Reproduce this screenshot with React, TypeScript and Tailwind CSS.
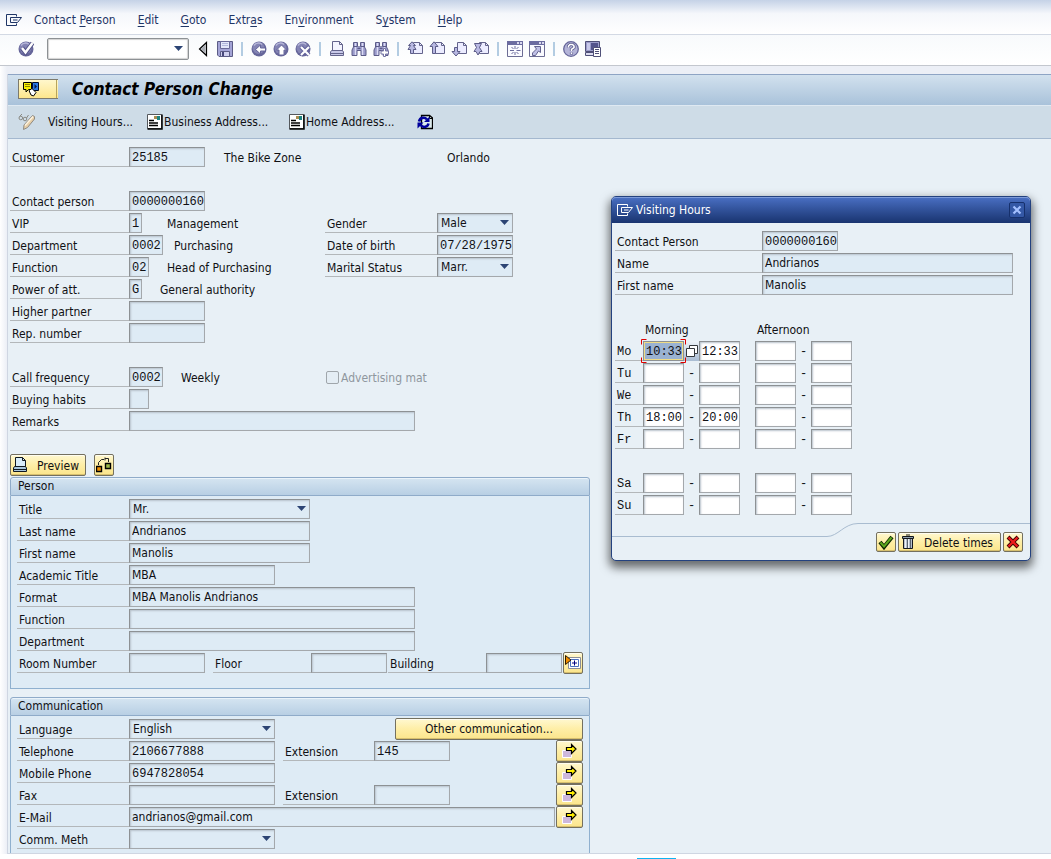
import React, { useState } from 'react';

const sans = "font-['DejaVu_Sans_Condensed','DejaVu_Sans',sans-serif]";
const mono = "font-['Liberation_Mono',monospace]";

const box = 'h-5 shrink-0 border border-[#a4a8ac] border-t-[#8d9194] border-l-[#8d9194] shadow-[inset_1px_1px_2px_#b9c3cc] outline-none';

interface FieldProps {
    id?: string;
    label?: string;
    value?: string;
    width: string;
    text?: boolean;
    white?: boolean;
}

const Field: React.FC<FieldProps> = ({ id, label, value = '', width, text, white }) => {
    const [current, setCurrent] = useState(value);
    return (
        <input
            id={id}
            aria-label={label}
            type="text"
            value={current}
            onChange={(e) => setCurrent(e.target.value)}
            className={`${box} pl-[2px] text-[12px] leading-4 ${width} ${text ? sans : `pt-[2px] ${mono}`} ${white ? 'bg-white' : 'bg-[#deebf5]'}`}
        />
    );
};

const Dropdown: React.FC<{ id: string; options: string[]; width: string }> = ({ id, options, width }) => (
    <div className={`relative h-5 shrink-0 ${width}`}>
        <select id={id} className={`${box} block w-full appearance-none bg-[#deebf5] pl-[3px] text-[12px] leading-4`}>
            {options.map((o) => (
                <option key={o}>{o}</option>
            ))}
        </select>
        <svg className="pointer-events-none absolute top-[7px] right-1 h-[5px] w-[9px]" viewBox="0 0 9 5">
            <path d="M0 0h9L4.500 5z" fill="#2c4474" />
        </svg>
    </div>
);

const Row: React.FC<{ children?: React.ReactNode }> = ({ children }) => <div className="flex h-[22px] items-center">{children}</div>;

interface LabelProps {
    htmlFor?: string;
    width: string;
    children: React.ReactNode;
    typewriter?: boolean;
}

const Label: React.FC<LabelProps> = ({ htmlFor, width, children, typewriter }) => (
    <label
        htmlFor={htmlFor}
        className={`block h-5 shrink-0 border-b border-[#b3b7ba] pl-[2px] leading-[22px] whitespace-nowrap ${width} ${typewriter ? mono : ''}`}
    >
        {children}
    </label>
);

const Text: React.FC<{ children: React.ReactNode; className?: string }> = ({ children, className = '' }) => (
    <span className={`pt-[2px] whitespace-nowrap ${className}`}>{children}</span>
);

const yellow = 'rounded-[2px] border border-[#74705f] bg-linear-to-b from-[#fff8d0] via-[#feeea6] to-[#fbe58c] shadow-[inset_0_1px_0_#fffdf0,inset_0_-1px_0_#d6bf6e]';

/* ---------- icons ---------- */

const Icon: React.FC<{ children: React.ReactNode }> = ({ children }) => (
    <svg width="16" height="16" viewBox="0 0 16 16" fill="none" className="block shrink-0">
        {children}
    </svg>
);

const MenuIcon = () => (
    <Icon>
        <path d="M10.500 4.500v-2h-10v11h10v-2M4.500 10.500v-5H15.500l-4 5H4.500M7 8h4.500" stroke="currentColor" />
    </Icon>
);

const Disc = () => (
    <>
        <circle cx="8" cy="8" r="7.500" fill="#66669a" />
        <circle cx="7.500" cy="7" r="6" fill="#8484b4" />
        <path d="M3 4.500c2-3 6-3 8-1" stroke="#b6b6d8" strokeWidth="1.500" />
    </>
);

const EnterIcon = () => (
    <Icon>
        <Disc />
        <path d="M4 7l3.500 4.500L14.500 2" stroke="#54548a" strokeWidth="4.500" />
        <path d="M4 7l3.500 4.500L14.500 2" stroke="#fff" strokeWidth="2.500" />
    </Icon>
);
const LeftIcon = () => (
    <Icon>
        <path d="M11.500 1.500v13l-7-6.500z" fill="#d4d6da" stroke="#000" strokeWidth="1.200" />
        <path d="M10 4.500v7L6 8z" fill="#a8acb4" />
    </Icon>
);
const SaveIcon = () => (
    <Icon>
        <path d="M.5.5h15v15H2l-1.500-1.500z" fill="#a4a4d6" stroke="#5c5c86" />
        <path d="M3.500.5h9v7h-9z" fill="#e4e8fa" stroke="#6a6a98" />
        <path d="M5 2.500h6M5 4.500h6" stroke="#b2b8dc" />
        <path d="M3.500 10.500h9v5h-9z" fill="#d0d0ee" stroke="#5c5c86" />
        <path d="M5 11h2v4H5z" fill="#48487a" />
    </Icon>
);
const BackIcon = () => (
    <Icon>
        <Disc />
        <path d="M4.500 8.500L9.500 4v3h5v3h-5v3z" fill="#fff" stroke="#66669a" />
    </Icon>
);
const ExitIcon = () => (
    <Icon>
        <Disc />
        <path d="M8.500 4l5 5h-2.500v5H6V9H3.500z" fill="#fff" stroke="#66669a" />
    </Icon>
);
const CancelIcon = () => (
    <Icon>
        <Disc />
        <path d="M6 6l8 8M14 6l-8 8" stroke="#60609a" strokeWidth="4" />
        <path d="M6 6l8 8M14 6l-8 8" stroke="#fff" strokeWidth="2.200" />
    </Icon>
);
const PrintIcon = ({ dark }: { dark?: boolean }) => (
    <Icon>
        <path d="M3.500 10.500v-10h7l3 3v7" fill={dark ? '#d8ecfa' : '#f4f4ff'} stroke={dark ? '#101820' : '#64648c'} />
        <path d="M10.500.5v3h3" stroke={dark ? '#101820' : '#64648c'} />
        <path d="M2.500 9.500h11l1 1.500v3.500H1.500V11z" fill={dark ? '#a8c6dc' : '#c8c8e8'} stroke={dark ? '#101820' : '#64648c'} />
        <path d="M1.500 12.500h13" stroke={dark ? '#101820' : '#64648c'} />
    </Icon>
);
const FindIcon = ({ next }: { next?: boolean }) => (
    <Icon>
        <path d="M2.500 1.500h4v3.500l1 1h1l1-1V1.500h4V6l1.500 3v5.500h-5v-5h-4v5h-5V9l1.500-3z" fill="#9c9ccc" stroke="#5c5c88" />
        <path d="M4.500 2v12M11.500 2v12" stroke="#dcdcf4" strokeWidth="1.400" />
        <path d="M2.500 5.500h4M9.500 5.500h4M6.500 7.500h3" stroke="#5c5c88" />
        {next && <path d="M10.500 7.500h2v2.500h3v3h-3v2.500h-2V13h-2.500v-3h2.500z" fill="#fff" stroke="#7474a4" />}
    </Icon>
);

const PageNavIcon = ({ kind }: { kind: 'first' | 'prev' | 'next' | 'last' }) => (
    <Icon>
        <path d="M6.500 1.500h6l3 3v8h-9z" fill="#ececff" stroke="#64648c" />
        <path d="M12.500 1.500v3h3" stroke="#64648c" />
        {kind === 'first' && <path d="M5 .8L8.500 4.500H6.500L9 8.500H6.500v4h-3v-4H1l2.500-4h-2z" fill="#b8b8e2" stroke="#5c5c88" />}
        {kind === 'prev' && <path d="M5 .8L9 5.500H6.500v7h-3v-7H1z" fill="#b8b8e2" stroke="#5c5c88" />}
        {kind === 'next' && <path d="M5 15L1 10.500h2.500v-4h3v4H9z" fill="#b8b8e2" stroke="#5c5c88" />}
        {kind === 'last' && <path d="M1.500 2.500h7l-2 4 2.500 4h-2L5 14l-2-3.500H1l2.500-4z" fill="#b8b8e2" stroke="#5c5c88" />}
    </Icon>
);
const SessionIcon = () => (
    <Icon>
        <path d="M.5.5h15v15H.5z" fill="#fafaff" stroke="#6c6c94" />
        <path d="M0 0h16v4H0z" fill="#6c6ca0" />
        <path d="M10 1h2v2h-2zM13 1h2v2h-2z" fill="#d8d8ee" />
        <path d="M8 5v3M8 11v3M3 9.500h4M9.500 9.500h4M4.500 6l2 2M9.500 11l2 2M11.500 6l-2 2M6.500 11l-2 2" stroke="#6c6c9c" />
    </Icon>
);
const ShortcutIcon = () => (
    <Icon>
        <path d="M.5.5h15v15H.5z" fill="#fafaff" stroke="#6c6c94" />
        <path d="M0 0h16v4H0z" fill="#6c6ca0" />
        <path d="M10 1h2v2h-2zM13 1h2v2h-2z" fill="#d8d8ee" />
        <path d="M5.500 5.500h6v6L9.500 10 6.500 14.500h-3V12L7.500 8z" fill="#c0c0e6" stroke="#62628e" />
    </Icon>
);
const HelpIcon = () => (
    <Icon>
        <circle cx="8" cy="8" r="7.300" fill="#b4b4d8" stroke="#66669a" strokeWidth="1.300" />
        <path d="M5.500 6.500V5L7 3.500h2.500L11 5v1.500L8.500 8.500V10M8.500 11.500v2" stroke="#5c5c90" strokeWidth="3.200" />
        <path d="M5.500 6.500V5L7 3.500h2.500L11 5v1.500L8.500 8.500V10M8.500 11.500v1.500" stroke="#fff" strokeWidth="1.600" />
    </Icon>
);
const LayoutIcon = () => (
    <Icon>
        <path d="M.5.500h14v10H.5z" fill="#9c9cca" stroke="#505078" />
        <path d="M2 2h3v7H2z" fill="#c8c8ea" />
        <path d="M6 2h7v7H6z" fill="#54548c" />
        <path d="M.5 11.500h10v3H.5z" fill="#dcdcf0" stroke="#505078" />
        <path d="M8.500 6.500h7v9h-7z" fill="#fff" stroke="#505078" />
        <path d="M10 8.500h4M10 10.500h4M10 12.500h4" stroke="#505078" />
    </Icon>
);
const PencilIcon = () => (
    <svg width="18" height="18" viewBox="0 0 18 18" fill="none" className="block">
        <circle cx="2.800" cy="5" r="1.800" stroke="#8a8a84" />
        <circle cx="7" cy="6" r="1.800" stroke="#8a8a84" />
        <path d="M1.500 3.500L4 1M8.500 5l2-3" stroke="#8a8a84" />
        <path d="M14.500 2.500l2 1v2.500L9.500 14.500l-4 2 .5-4.500z" fill="#e8cfa8" stroke="#8e8a82" />
        <path d="M7 12.500l8-9" stroke="#fdf4e2" strokeWidth="1.300" />
    </svg>
);
const AddressIcon = () => (
    <Icon>
        <path d="M.5.5h14v14H.5z" fill="#fff" stroke="#54585c" />
        <path d="M15 .5V15H.5" stroke="#000" strokeWidth="1.500" />
        <path d="M7 2h3v3H7z" fill="#a88c50" />
        <path d="M10 2h3v4h-3z" fill="#1c8482" />
        <path d="M2 6.500h5M2 9h9M2 11.500h9" stroke="#000" strokeWidth="1.500" />
    </Icon>
);
const RefreshIcon = () => (
    <Icon>
        <path d="M4.500 1.500h8l3 2.500v10.500h-11z" fill="#dceaec" stroke="#000" strokeWidth="1.300" />
        <path d="M12.500 1.500v3h3" stroke="#000" />
        <path d="M2 7.500C3 3.500 7.500 2.500 10 5.500M11.500 9.500c-1 4-5.500 4.500-8 1.500" stroke="#00009c" strokeWidth="2.600" />
        <path d="M12.500 2.500V8H7zM.5 14.500V8.500H6.500z" fill="#00009c" />
    </Icon>
);
const ServicesIcon = () => (
    <svg width="18" height="16" viewBox="0 0 18 16" fill="none" className="block">
        <path d="M1.500 1.500h8v7H6.500L4 11V8.500H1.500z" fill="#f8f000" stroke="#000" />
        <path d="M3 3.500h5M3 5.500h5" stroke="#8c8400" />
        <path d="M10.500 1.500h6v8h-6z" fill="#2a78e4" stroke="#000c28" />
        <path d="M12.500 3l2.500 2.500-2.500 2.500z" fill="#061848" />
        <path d="M7 9.500l3-2 4 4-2.500 3.500-2.500-1z" fill="#fff" stroke="#000" />
    </svg>
);
const RelationIcon = () => (
    <Icon>
        <path d="M2.500 8V5.500L5.500 2.500H8M9 .5v3M9 1.500h3.500V5" stroke="#222" />
        <path d="M.5 9.500h5v5h-5z" fill="#f09000" stroke="#000" strokeWidth="1.400" />
        <path d="M9.500 6.500h5v5h-5z" fill="#9cb848" stroke="#000" strokeWidth="1.400" />
    </Icon>
);
const ExpandIcon = () => (
    <Icon>
        <path d="M3.500 2.500h12v11h-12z" fill="#fff" stroke="#8a8e98" />
        <path d="M5.500 4.500h8v7h-8z" fill="#fff" stroke="#4a6fbe" />
        <path d="M9.500 5.500v5M7 8h5" stroke="#000080" />
        <path d="M.5.500L6 5 .5 9.500z" fill="#f08c00" stroke="#2c1c00" />
    </Icon>
);
const ArrowIcon = () => (
    <Icon>
        <path d="M.5 7.500h9v7h-9z" fill="#cdb8dc" stroke="#fff" />
        <path d="M4.500 4.500h5V1.500L14 6l-4.500 4.500v-3h-5z" fill="#ffee00" stroke="#000" strokeWidth="1.200" />
    </Icon>
);
const TrashIcon = () => (
    <Icon>
        <path d="M3.500 4.500h9v10h-9z" fill="#b6c0cc" stroke="#14181c" />
        <path d="M5.500 5v9M8.500 5v9" stroke="#eef2f6" />
        <path d="M7.500 5v9M10.500 5v9" stroke="#5a6470" />
        <path d="M2.500 2.500h11v2h-11z" fill="#90a0b0" stroke="#14181c" />
        <path d="M6 1h4" stroke="#14181c" />
    </Icon>
);
const CheckIcon = () => (
    <Icon>
        <path d="M2 8l4 5 8-10" stroke="#0c2400" strokeWidth="4" />
        <path d="M2.500 8.500L6 12.500 13.500 3.500" stroke="#5ca81c" strokeWidth="2" />
    </Icon>
);
const CrossIcon = () => (
    <Icon>
        <path d="M3 3l10 10M13 3L3 13" stroke="#400000" strokeWidth="4" />
        <path d="M3.500 3.500l9 9M12.500 3.500l-9 9" stroke="#ee1c1c" strokeWidth="2.200" />
    </Icon>
);

/* ---------- top bars ---------- */

const menus = [
    ['Contact ', 'P', 'erson'],
    ['', 'E', 'dit'],
    ['', 'G', 'oto'],
    ['Extr', 'a', 's'],
    ['En', 'v', 'ironment'],
    ['S', 'y', 'stem'],
    ['', 'H', 'elp'],
];

const MenuBar = () => (
    <nav className="flex h-[35px] items-center border-b border-[#d3d9e4] bg-linear-to-b from-[#c5d2e7] via-[#f5f7fb] via-40% to-white pt-[6px] pl-[6px] text-[#1f3566]">
        <button aria-label="System menu">
            <MenuIcon />
        </button>
        <div className="flex gap-[22px] pl-3">
            {menus.map(([before, key, after]) => (
                <button key={before + key} className="leading-4 whitespace-pre">
                    {before}
                    <span className="underline underline-offset-2">{key}</span>
                    {after}
                </button>
            ))}
        </div>
    </nav>
);

type Tool = [string, React.ReactNode];

const toolGroups: Tool[][] = [
    [
        ['Back', <BackIcon />],
        ['Exit', <ExitIcon />],
        ['Cancel', <CancelIcon />],
    ],
    [
        ['Print', <PrintIcon />],
        ['Find', <FindIcon />],
        ['Find next', <FindIcon next />],
    ],
    [
        ['First page', <PageNavIcon kind="first" />],
        ['Previous page', <PageNavIcon kind="prev" />],
        ['Next page', <PageNavIcon kind="next" />],
        ['Last page', <PageNavIcon kind="last" />],
    ],
    [
        ['New session', <SessionIcon />],
        ['Create shortcut', <ShortcutIcon />],
    ],
    [
        ['Help', <HelpIcon />],
        ['Customize layout', <LayoutIcon />],
    ],
];

const ToolBar = () => (
    <div className="flex h-[31px] items-center gap-[6px] border-b border-[#c3c7ce] bg-linear-to-b from-[#f8fafc] to-white pb-[2px] pl-[18px]">
        <button aria-label="Enter">
            <EnterIcon />
        </button>
        <div className="relative ml-[7px] h-[22px] w-[142px]">
            <input
                aria-label="Command"
                type="text"
                className="h-full w-full rounded-[2px] border border-[#8d9194] bg-white px-1 shadow-[inset_0_0_1px_1px_#d2d2d2] outline-none"
            />
            <svg className="pointer-events-none absolute top-2 right-[6px] h-[5px] w-[9px]" viewBox="0 0 9 5">
                <path d="M0 0h9L4.500 5z" fill="#2c4474" />
            </svg>
        </div>
        <button aria-label="Hide command field">
            <LeftIcon />
        </button>
        <button aria-label="Save">
            <SaveIcon />
        </button>
        {toolGroups.map((group, i) => (
            <React.Fragment key={i}>
                <span className="mx-[2px] h-[14px] w-[2px] bg-[#b3cce2]" />
                {group.map(([name, icon]) => (
                    <button key={name} aria-label={name}>
                        {icon}
                    </button>
                ))}
            </React.Fragment>
        ))}
    </div>
);

const TitleBar = () => (
    <header className="border-t border-[#8ea4c4]">
        <div className="flex h-[31px] items-center gap-[14px] border-b border-[#dfe9f2] bg-linear-to-b from-[#d2e1ee] to-[#a9c2da] pb-[2px] pl-[10px]">
            <button
                aria-label="Services for object"
                className="flex h-5 w-10 items-center border border-r-0 border-[#7d7a6c] bg-linear-to-b from-[#fff7cc] to-[#fde68c] pl-[3px]"
            >
                <ServicesIcon />
                <span className="ml-4 h-[18px] w-px bg-[#b8a45c]" />
            </button>
            <h1 className="text-[17px] leading-5 font-bold text-black italic">Contact Person Change</h1>
        </div>
        <div className="flex h-[33px] items-center border-b border-[#a4b8cf] bg-[#cedce7] pl-[10px]">
            <button aria-label="Display or change">
                <PencilIcon />
            </button>
            <button className="ml-3 w-[99px] text-left leading-4">Visiting Hours...</button>
            <button className="flex w-[142px] items-center gap-px leading-4">
                <AddressIcon />
                Business Address...
            </button>
            <button className="flex w-[128px] items-center gap-px leading-4">
                <AddressIcon />
                Home Address...
            </button>
            <button aria-label="Refresh">
                <RefreshIcon />
            </button>
        </div>
    </header>
);

/* ---------- form ---------- */

const GeneralData = () => (
    <section className="pl-[2px]">
        <Row>
            <Label htmlFor="customer" width="w-[119px]">Customer</Label>
            <Field id="customer" value="25185" width="w-[76px]" />
            <Text className="ml-[19px] w-[223px]">The Bike Zone</Text>
            <Text>Orlando</Text>
        </Row>
        <Row />
        <Row>
            <Label htmlFor="contact" width="w-[119px]">Contact person</Label>
            <Field id="contact" value="0000000160" width="w-[76px]" />
        </Row>
        <div className="flex">
            <div className="w-[315px]">
                <Row>
                    <Label htmlFor="vip" width="w-[119px]">VIP</Label>
                    <Field id="vip" value="1" width="w-[13px]" />
                    <Text className="ml-[25px]">Management</Text>
                </Row>
                <Row>
                    <Label htmlFor="dept" width="w-[119px]">Department</Label>
                    <Field id="dept" value="0002" width="w-[34px]" />
                    <Text className="ml-[11px]">Purchasing</Text>
                </Row>
                <Row>
                    <Label htmlFor="func" width="w-[119px]">Function</Label>
                    <Field id="func" value="02" width="w-5" />
                    <Text className="ml-[18px]">Head of Purchasing</Text>
                </Row>
                <Row>
                    <Label htmlFor="power" width="w-[119px]">Power of att.</Label>
                    <Field id="power" value="G" width="w-[13px]" />
                    <Text className="ml-[18px]">General authority</Text>
                </Row>
                <Row>
                    <Label htmlFor="higher" width="w-[119px]">Higher partner</Label>
                    <Field id="higher" width="w-[76px]" />
                </Row>
                <Row>
                    <Label htmlFor="rep" width="w-[119px]">Rep. number</Label>
                    <Field id="rep" width="w-[76px]" />
                </Row>
            </div>
            <div>
                <Row>
                    <Label htmlFor="gender" width="w-[112px]">Gender</Label>
                    <Dropdown id="gender" options={['Male', 'Female']} width="w-[76px]" />
                </Row>
                <Row>
                    <Label htmlFor="birth" width="w-[112px]">Date of birth</Label>
                    <Field id="birth" value="07/28/1975" width="w-[76px]" />
                </Row>
                <Row>
                    <Label htmlFor="marital" width="w-[112px]">Marital Status</Label>
                    <Dropdown id="marital" options={['Marr.', 'Single']} width="w-[76px]" />
                </Row>
            </div>
        </div>
        <Row />
        <Row>
            <Label htmlFor="freq" width="w-[119px]">Call frequency</Label>
            <Field id="freq" value="0002" width="w-[34px]" />
            <Text className="ml-[18px] w-[145px]">Weekly</Text>
            <label className="flex items-center gap-[2px] text-[#8f979e]">
                <input type="checkbox" disabled className="h-[13px] w-[13px] appearance-none rounded-[2px] border border-[#a0a6ab] bg-[#e4edf4]" />
                <Text>Advertising mat</Text>
            </label>
        </Row>
        <Row>
            <Label htmlFor="habits" width="w-[119px]">Buying habits</Label>
            <Field id="habits" width="w-5" />
        </Row>
        <Row>
            <Label htmlFor="remarks" width="w-[119px]">Remarks</Label>
            <Field id="remarks" width="w-[286px]" />
        </Row>
        <Row />
        <div className="flex gap-2">
            <button className={`flex h-[22px] w-[76px] items-center gap-[9px] pl-[1px] leading-4 ${yellow}`}>
                <PrintIcon dark />
                <Text>Preview</Text>
            </button>
            <button aria-label="Relationships" className={`flex h-[22px] w-5 items-center justify-center ${yellow}`}>
                <RelationIcon />
            </button>
        </div>
    </section>
);

const panelHead = 'h-[19px] rounded-t-[3px] border border-[#8fabc9] bg-linear-to-b from-[#d5e5f1] to-[#b8cfe4] pl-[7px] leading-4 shadow-[inset_0_1px_0_#eaf3fa]';

const PersonPanel = () => (
    <section className="mt-px ml-[2px] w-[580px]">
        <h2 className={panelHead}>Person</h2>
        <div className="border border-t-0 border-[#8fb0cf] bg-[#deebf5] pt-[2px] pb-[14px] pl-[6px]">
            <Row>
                <Label htmlFor="title" width="w-28">Title</Label>
                <Dropdown id="title" options={['Mr.', 'Ms.']} width="w-[181px]" />
            </Row>
            <Row>
                <Label htmlFor="last" width="w-28">Last name</Label>
                <Field id="last" value="Andrianos" width="w-[181px]" text />
            </Row>
            <Row>
                <Label htmlFor="first" width="w-28">First name</Label>
                <Field id="first" value="Manolis" width="w-[181px]" text />
            </Row>
            <Row>
                <Label htmlFor="academic" width="w-28">Academic Title</Label>
                <Field id="academic" value="MBA" width="w-[146px]" text />
            </Row>
            <Row>
                <Label htmlFor="format" width="w-28">Format</Label>
                <Field id="format" value="MBA Manolis Andrianos" width="w-[286px]" text />
            </Row>
            <Row>
                <Label htmlFor="pfunc" width="w-28">Function</Label>
                <Field id="pfunc" width="w-[286px]" />
            </Row>
            <Row>
                <Label htmlFor="pdept" width="w-28">Department</Label>
                <Field id="pdept" width="w-[286px]" />
            </Row>
            <Row>
                <Label htmlFor="room" width="w-28">Room Number</Label>
                <Field id="room" width="w-[76px]" />
                <span className="w-2" />
                <Label htmlFor="floor" width="w-[98px]">Floor</Label>
                <Field id="floor" width="w-[76px]" />
                <span className="w-px" />
                <Label htmlFor="building" width="w-[98px]">Building</Label>
                <Field id="building" width="w-[76px]" />
                <button aria-label="More fields" className={`ml-px flex h-[22px] w-5 items-center justify-center ${yellow}`}>
                    <ExpandIcon />
                </button>
            </Row>
        </div>
    </section>
);

const ArrowButton: React.FC<{ label: string }> = ({ label }) => (
    <button aria-label={label} className={`mr-[6px] ml-auto flex h-[22px] w-[27px] items-center justify-center ${yellow}`}>
        <ArrowIcon />
    </button>
);

const CommunicationPanel = () => (
    <section className="mt-2 ml-[2px] w-[580px]">
        <h2 className={panelHead}>Communication</h2>
        <div className="border-x border-[#8fb0cf] bg-[#deebf5] pt-[2px] pb-[3px] pl-[6px]">
            <Row>
                <Label htmlFor="language" width="w-28">Language</Label>
                <Dropdown id="language" options={['English', 'German']} width="w-[146px]" />
                <button className={`mr-[6px] ml-auto h-[22px] w-[188px] leading-4 ${yellow}`}>Other communication...</button>
            </Row>
            <Row>
                <Label htmlFor="tel" width="w-28">Telephone</Label>
                <Field id="tel" value="2106677888" width="w-[146px]" />
                <span className="w-2" />
                <Label htmlFor="telext" width="w-[91px]">Extension</Label>
                <Field id="telext" value="145" width="w-[76px]" />
                <ArrowButton label="More telephone numbers" />
            </Row>
            <Row>
                <Label htmlFor="mobile" width="w-28">Mobile Phone</Label>
                <Field id="mobile" value="6947828054" width="w-[146px]" />
                <ArrowButton label="More mobile numbers" />
            </Row>
            <Row>
                <Label htmlFor="fax" width="w-28">Fax</Label>
                <Field id="fax" width="w-[146px]" />
                <span className="w-2" />
                <Label htmlFor="faxext" width="w-[91px]">Extension</Label>
                <Field id="faxext" width="w-[76px]" />
                <ArrowButton label="More fax numbers" />
            </Row>
            <Row>
                <Label htmlFor="email" width="w-28">E-Mail</Label>
                <Field id="email" value="andrianos@gmail.com" width="w-[426px]" text />
                <ArrowButton label="More e-mail addresses" />
            </Row>
            <Row>
                <Label htmlFor="comm" width="w-28">Comm. Meth</Label>
                <Dropdown id="comm" options={['', 'E-Mail', 'Telephone']} width="w-[146px]" />
            </Row>
        </div>
    </section>
);

/* ---------- popup ---------- */

const days = [
    { day: 'Mo', from: '10:33', to: '12:33' },
    { day: 'Tu' },
    { day: 'We' },
    { day: 'Th', from: '18:00', to: '20:00' },
    { day: 'Fr' },
    null,
    { day: 'Sa' },
    { day: 'Su' },
];

const Dash = () => <span className="w-[15px] pt-[2px] text-center font-['Liberation_Mono',monospace]">-</span>;

const FocusedTime: React.FC<{ id: string; value: string }> = ({ id, value }) => {
    const [time, setTime] = useState(value);
    return (
        <div className="relative h-5 w-[41px]">
            <input
                id={id}
                type="text"
                value={time}
                onChange={(e) => setTime(e.target.value)}
                className="h-5 w-[41px] border border-[#8d9194] bg-[#9ab2d2] pt-[2px] pl-[2px] font-['Liberation_Mono',monospace] text-[12px] leading-4 shadow-[inset_0_0_0_1px_#f0dc86] outline-none"
            />
            <svg className="pointer-events-none absolute -top-[2px] -left-[2px]" width="45" height="24" viewBox="0 0 45 24" fill="none" stroke="#e00000">
                <path d="M.5 5.500v-5h5M39.500.500h5v5M.5 18.500v5h5M39.500 23.500h5v-5" />
            </svg>
        </div>
    );
};

const VisitingHours = () => (
    <div
        role="dialog"
        aria-label="Visiting Hours"
        className="absolute top-[196px] left-[611px] w-[420px] rounded-[5px] border border-[#24427f] bg-[#e8f0f6] shadow-[0_5px_10px_2px_rgba(0,0,0,0.55)]"
    >
        <div className="flex h-[26px] items-center gap-[3px] rounded-t-[4px] bg-linear-to-b from-[#4a70c4] to-[#193470] pr-[5px] pl-[5px] text-white shadow-[inset_0_1px_0_#7d9ad8]">
            <MenuIcon />
            <span className="leading-4">Visiting Hours</span>
            <button aria-label="Close" className="ml-auto flex h-4 w-4 items-center justify-center rounded-[2px] border border-[#16306c] bg-[#3458a6]">
                <svg width="10" height="10" viewBox="0 0 10 10" stroke="#a4c0ff" strokeWidth="2.200">
                    <path d="M1.500 1.500l7 7M8.500 1.500l-7 7" />
                </svg>
            </button>
        </div>
        <div className="pt-[7px] pl-[3px]">
            <Row>
                <Label htmlFor="p-contact" width="w-[147px]">Contact Person</Label>
                <Field id="p-contact" value="0000000160" width="w-[76px]" />
            </Row>
            <Row>
                <Label htmlFor="p-name" width="w-[147px]">Name</Label>
                <Field id="p-name" value="Andrianos" width="w-[251px]" text />
            </Row>
            <Row>
                <Label htmlFor="p-first" width="w-[147px]">First name</Label>
                <Field id="p-first" value="Manolis" width="w-[251px]" text />
            </Row>
            <Row />
            <Row>
                <Text className="w-[142px] pl-[30px]">Morning</Text>
                <Text>Afternoon</Text>
            </Row>
            {days.map((d, i) =>
                d ? (
                    <Row key={d.day}>
                        <Label htmlFor={`${d.day}-1`} width="w-7" typewriter>{d.day}</Label>
                        {i === 0 ? (
                            <>
                                <FocusedTime id="Mo-1" value="10:33" />
                                <button aria-label="Choose time" className="flex h-5 w-[15px] items-center justify-center bg-linear-to-b from-[#eef3f8] to-[#a9bcd3]">
                                    <svg width="12" height="12" viewBox="0 0 12 12" fill="#fff" stroke="#35383c">
                                        <path d="M3.500.500h8v8h-8z" />
                                        <path d="M.5 3.500h8v8h-8z" />
                                    </svg>
                                </button>
                            </>
                        ) : (
                            <>
                                <Field id={`${d.day}-1`} value={d.from} width="w-[41px]" white />
                                <Dash />
                            </>
                        )}
                        <Field label={`${d.day} morning to`} value={d.to} width="w-[41px]" white />
                        <span className="w-[15px]" />
                        <Field label={`${d.day} afternoon from`} width="w-[41px]" white />
                        <Dash />
                        <Field label={`${d.day} afternoon to`} width="w-[41px]" white />
                    </Row>
                ) : (
                    <Row key={i} />
                ),
            )}
        </div>
        <div className="mt-[7px] flex items-start">
            <div className="h-[14px] flex-1 border-b border-[#a9bcd0]" />
            <svg width="40" height="14" viewBox="0 0 40 14" fill="none" stroke="#a9bcd0">
                <path d="M0 13.500h5C16 13.500 22 .5 36 .5h4" />
            </svg>
            <div className="flex w-[168px] justify-end gap-[2px] border-t border-[#a9bcd0] pt-2 pr-[7px] pb-2">
                <button aria-label="Continue" className={`flex h-5 w-5 items-center justify-center ${yellow}`}>
                    <CheckIcon />
                </button>
                <button className={`flex h-5 w-[103px] items-center gap-2 pl-[1px] leading-4 whitespace-nowrap ${yellow}`}>
                    <TrashIcon />
                    <Text>Delete times</Text>
                </button>
                <button aria-label="Cancel" className={`flex h-5 w-5 items-center justify-center ${yellow}`}>
                    <CrossIcon />
                </button>
            </div>
        </div>
    </div>
);

export default function App() {
    return (
        <div className={`relative bg-white text-[12px] leading-4 text-[#101014] ${sans}`}>
            <MenuBar />
            <ToolBar />
            <div className="bg-linear-to-r from-white to-[#eceff6] to-[7px] pt-2 pl-[7px]">
                <main className="border-b border-l border-[#cfd6e2] bg-[#e8f0f6]">
                    <TitleBar />
                    <div className="pt-[7px]">
                        <GeneralData />
                        <PersonPanel />
                        <CommunicationPanel />
                    </div>
                </main>
            </div>
            <div className="h-[5px] pt-1">
                <div className="ml-[637px] h-px w-[39px] bg-[#10b4f0]" />
            </div>
            <VisitingHours />
        </div>
    );
}
